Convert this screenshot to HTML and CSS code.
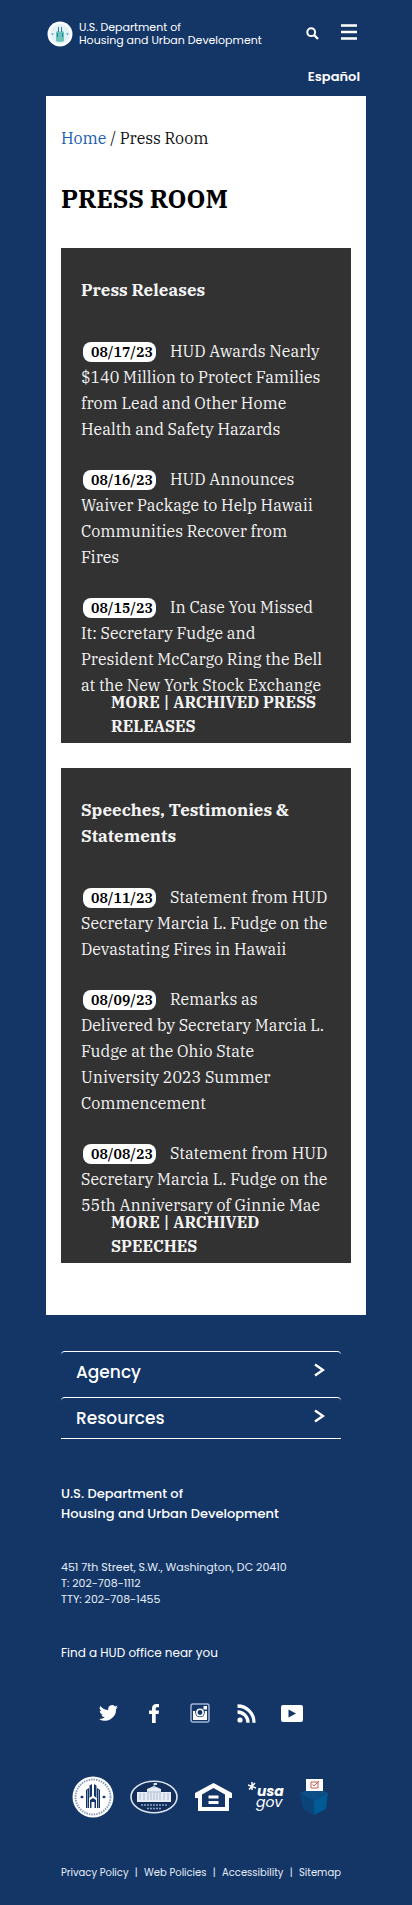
FILE: index.html
```html
<!DOCTYPE html>
<html lang="en">
<head>
<meta charset="utf-8">
<meta name="viewport" content="width=device-width, initial-scale=1">
<title>Press Room | HUD</title>
<link rel="stylesheet" href="styles.css">
</head>
<body>
<header class="site-header">
  <div class="bar">
    <a class="brand" href="#">
      <svg class="brand-seal" viewBox="0 0 26 26" aria-hidden="true">
        <circle cx="13" cy="13" r="12.500" fill="#e4f1f6"/>
        <circle cx="13" cy="13" r="11" fill="none" stroke="#fff" stroke-width="2"/>
        <path d="M9 11l2-1V6h1v5l1-1 1 1V6h1v4l2 1v9q-4 2-8 0z" fill="#6cc3b8"/>
        <path d="M11 6h1v5h-1zM14 6h1v5h-1zM10 12h1v4h-1zM15 12h1v4h-1z" fill="#2a7fb0"/>
        <circle cx="5.500" cy="13" r="1" fill="#57b7ad"/><circle cx="20.500" cy="13" r="1" fill="#57b7ad"/>
      </svg>
      <span>U.S. Department of<br>Housing and Urban Development</span>
    </a>
    <button class="icon-button search" type="button" aria-label="Search">
      <svg width="13" height="13" viewBox="0 0 13 13"><circle cx="5.200" cy="5.200" r="3.900" fill="none" stroke="#fff" stroke-width="2"/><path d="M8 8l4 4" stroke="#fff" stroke-width="2.400"/></svg>
    </button>
    <button class="icon-button" type="button" aria-label="Menu">
      <svg width="16" height="16" viewBox="0 0 16 16"><path d="M0 1.500h16M0 8h16M0 14.500h16" stroke="#fff" stroke-width="2.500"/></svg>
    </button>
  </div>
  <a class="language" href="#" lang="es">Español</a>
</header>

<main class="content">
  <nav class="crumbs" aria-label="Breadcrumb"><a href="#">Home</a> / Press Room</nav>
  <h1>PRESS ROOM</h1>

  <section class="card">
    <h2>Press Releases</h2>
    <ul class="news">
      <li><time>08/17/23</time><a href="#">HUD Awards Nearly $140 Million to Protect Families from Lead and Other Home Health and Safety Hazards</a></li>
      <li><time>08/16/23</time><a href="#">HUD Announces Waiver Package to Help Hawaii Communities Recover from<br>Fires</a></li>
      <li><time>08/15/23</time><a href="#">In Case You Missed It: Secretary Fudge and President McCargo Ring the Bell at the New York Stock Exchange</a></li>
    </ul>
    <p class="more"><a href="#">MORE</a> | <a href="#">ARCHIVED PRESS RELEASES</a></p>
  </section>

  <section class="card">
    <h2>Speeches, Testimonies &amp; Statements</h2>
    <ul class="news">
      <li><time>08/11/23</time><a href="#">Statement from HUD Secretary Marcia L. Fudge on the Devastating Fires in Hawaii</a></li>
      <li><time>08/09/23</time><a href="#">Remarks as Delivered by Secretary Marcia L. Fudge at the Ohio State University 2023 Summer Commencement</a></li>
      <li><time>08/08/23</time><a href="#">Statement from HUD Secretary Marcia L. Fudge on the 55th Anniversary of Ginnie Mae</a></li>
    </ul>
    <p class="more"><a href="#">MORE</a> | <a href="#">ARCHIVED SPEECHES</a></p>
  </section>
</main>

<footer class="site-footer">
  <div class="menus">
    <button type="button">Agency
      <svg width="11" height="14" viewBox="0 0 11 14" aria-hidden="true"><path d="M1 1.500L9 7 1 12.500" fill="none" stroke="#fff" stroke-width="2.400"/></svg></button>
    <button type="button">Resources
      <svg width="11" height="14" viewBox="0 0 11 14" aria-hidden="true"><path d="M1 1.500L9 7 1 12.500" fill="none" stroke="#fff" stroke-width="2.400"/></svg></button>
  </div>
  <p class="dept">U.S. Department of<br>Housing and Urban Development</p>
  <address>451 7th Street, S.W., Washington, DC 20410<br>T: 202-708-1112<br>TTY: 202-708-1455</address>
  <a class="office" href="#">Find a HUD office near you</a>

  <div class="social">
    <a href="#" aria-label="Twitter"><svg width="19" height="16" viewBox="0 0 24 20"><path fill="#fff" d="M24 2.400a10 10 0 0 1-2.800.8A5 5 0 0 0 23.300.500a10 10 0 0 1-3.100 1.200 4.900 4.900 0 0 0-8.400 4.500A14 14 0 0 1 1.700 1a4.900 4.900 0 0 0 1.500 6.600 5 5 0 0 1-2.200-.6 4.900 4.900 0 0 0 4 4.900 5 5 0 0 1-2.300.1 4.900 4.900 0 0 0 4.600 3.400A10 10 0 0 1 0 17.500a14 14 0 0 0 21.500-12.600A10 10 0 0 0 24 2.400z"/></svg></a>
    <a href="#" aria-label="Facebook"><svg width="10" height="19" viewBox="0 0 10 19"><path fill="#fff" d="M3 19v-9H0V6.500h3V4.600C3 1.600 4.600 0 7.300 0H10v3.300H8.200C7 3.300 6.700 3.900 6.700 5v1.500H10L9.600 10H6.700v9z"/></svg></a>
    <a href="#" aria-label="Instagram"><svg width="20" height="20" viewBox="0 0 20 20"><rect x="1" y="1" width="18" height="18" rx="2" fill="none" stroke="#9fb6d6" stroke-width="1.500"/><path fill="#fff" d="M3 8h2.200v1.500a4.800 4.800 0 0 0 9.600 0V8H17v9H3z"/><circle cx="10" cy="9.500" r="3.200" fill="none" stroke="#fff" stroke-width="1.500"/><path fill="#fff" d="M13.500 3H17v3.500h-3.500z"/></svg></a>
    <a href="#" aria-label="RSS"><svg width="19" height="19" viewBox="0 0 19 19"><circle cx="3" cy="16" r="2.600" fill="#fff"/><path d="M.5 8A10.500 10.500 0 0 1 11 18.700M.5 2A16.500 16.500 0 0 1 17 18.700" fill="none" stroke="#fff" stroke-width="3.300"/></svg></a>
    <a href="#" aria-label="YouTube"><svg width="22" height="17" viewBox="0 0 22 17"><rect width="22" height="17" rx="2" fill="#fff"/><path d="M7.500 4.500L15 8.500l-7.500 4z" fill="#143667"/></svg></a>
  </div>

  <div class="partners">
    <a href="#" aria-label="HUD"><svg width="42" height="42" viewBox="0 0 42 42"><circle cx="21" cy="21" r="20.500" fill="#fff"/><circle cx="21" cy="21" r="17.500" fill="none" stroke="#8b9dbd" stroke-width="2" stroke-dasharray="1.500 1"/><circle cx="21" cy="21" r="14.500" fill="#fff"/><path fill="#143667" d="M14 14l3-2v20h-3zM17.500 9.500L20 8v12l-2.500 2zM22 8l2.500 1.500V22L22 20zM25 12l3 2v18h-3zM18 24l3-2 3 2v8h-1.500v-6h-3v6H18zM8 21l2-1.500 2 1.500-2 1.500zM30 21l2-1.500 2 1.500-2 1.500z"/><path d="M15.500 14v18M26.500 14v18" stroke="#9db0cd" stroke-width=".8"/></svg></a>
    <a href="#" aria-label="The White House"><svg width="48" height="34" viewBox="0 0 48 34"><ellipse cx="24" cy="17" rx="23" ry="15.700" fill="#132f59" stroke="#dce5f2" stroke-width="1.600"/><path fill="#e8edf5" d="M7 12h10V9l7-3 7 3v3h10v10H7z"/><path d="M10 13v7M14 13v7M18 13v7M21 13v7M24 13v7M27 13v7M30 13v7M34 13v7M38 13v7" stroke="#a9b8d0"/><path d="M17 12h14M24 8V3" stroke="#a9b8d0"/><path fill="#dce5f2" d="M24 3h3v2h-3z"/><path d="M11 25h26M17 28.500h14" stroke="#8ea3c5" stroke-width="1.400" stroke-dasharray="2 1"/></svg></a>
    <a href="#" aria-label="Equal Housing Opportunity"><svg width="37" height="28" viewBox="0 0 37 28"><path fill="#fff" fill-rule="evenodd" d="M18.500 0L37 10v5h-3v13H3V15H0v-5zM18.500 5L7 11.500V24h23V11.500z"/><path fill="#fff" d="M13.500 12.500h10v3h-10zM13.500 18h10v3h-10z"/></svg></a>
    <a href="#" aria-label="USA.gov"><svg width="36" height="30" viewBox="0 0 36 30"><path d="M4 0v8M0 3l8 3M1 7.500L7 1" stroke="#fff" stroke-width="1.500"/><text class="usa" x="9" y="14">usa</text><text class="gov" x="8" y="25">gov</text></svg></a>
    <a href="#" aria-label="Vote.gov"><svg width="28" height="38" viewBox="0 0 28 38"><path fill="#0b4f86" d="M0 15l14-6 14 6-14 8z"/><path fill="#0a4479" d="M0 15l14 8v14L3 31z"/><path fill="#005b94" d="M28 15l-14 8v14l12-6z"/><path fill="#fff" d="M6 1h17v12H6z"/><path d="M11 4h7v6h-7zM12.500 6.500l1.500 1.500L19 3" fill="none" stroke="#c65c51"/></svg></a>
  </div>

  <nav class="legal" aria-label="Legal"><a href="#">Privacy Policy</a><span>|</span><a href="#">Web Policies</a><span>|</span><a href="#">Accessibility</a><span>|</span><a href="#">Sitemap</a></nav>
</footer>
</body>
</html>
```
FILE: styles.css
```css
* { box-sizing: border-box; }

body {
  margin: 0;
  padding: 0 46px;
  background: #143667;
  color: #fff;
  font-family: Poppins, Inter, sans-serif;
}

a { color: inherit; text-decoration: none; }
h1, h2, p, ul { margin: 0; padding: 0; }
ul { list-style: none; }
svg { display: block; }

button {
  border: 0;
  background: none;
  color: inherit;
  font-family: inherit;
}

.site-header { padding: 20px 6px 9px 0; }
.bar { display: flex; align-items: center; height: 28px; }
.brand {
  display: flex;
  align-items: center;
  gap: 6px;
  margin-right: auto;
  padding-left: 1px;
  font-size: 11px;
  line-height: 13px;
  white-space: nowrap;
}
.brand-seal { width: 26px; height: 26px; }
.icon-button { padding: 0 3px 4px 0; }
.search { margin-right: 19px; padding: 0 3px 2px 0; }
.language {
  display: block;
  margin-top: 19px;
  text-align: right;
  font-size: 13px;
  line-height: 20px;
  font-weight: 600;
}

.content {
  padding: 29px 15px 52px;
  background: #fff;
  color: #111;
  font-family: "IBM Plex Serif", "DejaVu Serif Condensed", "DejaVu Serif", serif;
}
.crumbs { font-size: 16px; line-height: 26px; }
.crumbs a { color: #1a5cb0; }
h1 {
  padding: 32px 0 33px;
  color: #000;
  font-size: 25px;
  line-height: 32px;
}

.card {
  padding: 29px 20px 5px;
  background: #323232;
  color: #f4f4f4;
}
.card + .card { margin-top: 25px; }
.card h2 {
  margin-bottom: 35px;
  font-size: 17px;
  line-height: 26px;
}
.news {
  display: grid;
  gap: 24px;
  font-size: 16px;
  line-height: 26px;
}
.news time {
  display: inline-block;
  margin: 0 14px 0 2px;
  padding: 0 3px 0 8px;
  border-radius: 8px;
  background: #fff;
  color: #000;
  font-size: 14px;
  font-weight: 600;
  line-height: 20px;
}
.more {
  margin: -8px 0 0 30px;
  font-size: 16px;
  font-weight: 700;
  line-height: 24px;
}

.site-footer { padding: 36px 25px 22px 15px; }
.menus { border-bottom: 1px solid #fff; }
.menus button {
  display: flex;
  align-items: flex-start;
  justify-content: space-between;
  width: 100%;
  height: 46px;
  padding: 9px 16px 0 15px;
  border-top: 1px solid #fff;
  border-radius: 4px;
  font-size: 17px;
  font-weight: 500;
  line-height: 22px;
}
.menus button:last-child { height: 41px; }
.menus svg { margin-top: 2px; }
.dept {
  margin-top: 45px;
  font-size: 13px;
  font-weight: 500;
  line-height: 20px;
}
address {
  margin-top: 35px;
  color: #e4edf8;
  font-size: 11px;
  font-style: normal;
  line-height: 16px;
}
.office {
  display: block;
  margin-top: 36px;
  font-size: 12px;
  line-height: 20px;
}
.social {
  display: grid;
  grid-template-columns: repeat(5, 1fr);
  align-items: center;
  justify-items: center;
  margin: 40px 26px 0 24px;
}
.partners {
  display: flex;
  align-items: center;
  justify-content: space-between;
  margin: 53px 13px 0 11px;
}
.usa, .gov { fill: #fff; font-size: 14px; font-style: italic; }
.usa { font-weight: 700; }
.gov { font-weight: 400; }
.legal {
  display: flex;
  justify-content: space-between;
  margin-top: 45px;
  color: #e4edf8;
  font-size: 10px;
  line-height: 20px;
  white-space: nowrap;
}
```
